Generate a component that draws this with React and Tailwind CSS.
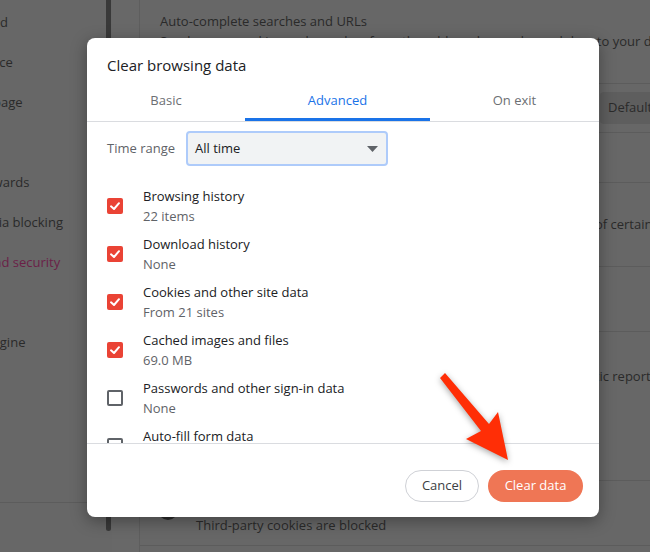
import React from 'react';

// Sidebar labels – only the tail of each one is on screen
const navItems = [
  { label: 'Get started' },
  { label: 'Appearance' },
  { label: 'My start page' },
  { label: '' },
  { label: 'Opera Rewards', shift: '-ml-[64px]' },
  { label: 'Social media blocking', shift: '-ml-[67px]' },
  { label: 'Privacy and security', active: true },
  { label: '' },
  { label: 'Search engine' },
];

const dataTypes = [
  { title: 'Browsing history', sub: '22 items', checked: true },
  { title: 'Download history', sub: 'None', checked: true },
  { title: 'Cookies and other site data', sub: 'From 21 sites', checked: true },
  { title: 'Cached images and files', sub: '69.0 MB', checked: true },
  { title: 'Passwords and other sign-in data', sub: 'None', checked: false },
  { title: 'Auto-fill form data', sub: 'None', checked: false },
];

const Checkbox = ({ checked }) =>
  checked ? (
    <div className="w-4 h-4 rounded-[2px] bg-[#ea4335] flex items-center justify-center shrink-0">
      <svg width="16" height="16" viewBox="0 0 16 16">
        <polyline points="4,8.3 7,11 12,5.2" fill="none" stroke="#fff" strokeWidth="2" strokeLinecap="round" strokeLinejoin="round" />
      </svg>
    </div>
  ) : (
    <div className="w-4 h-4 rounded-[2px] border-2 border-[#5f6368] shrink-0" />
  );

const Background = () => (
  <div className="flex h-full">
    {/* sidebar */}
    <div className="w-[105px] shrink-0 flex flex-col overflow-hidden border-b border-[#5c5c5c] h-[503px] pt-[3px]">
      {navItems.map((item, i) => (
        <div key={i} className="h-10 flex items-center">
          <span
            className={`${item.shift || '-ml-[60px]'} whitespace-nowrap text-[13px] ${item.active ? 'text-[#6b1f47]' : 'text-[#2a2a2a]'}`}
          >
            {item.label}
          </span>
        </div>
      ))}
    </div>
    {/* scrollbar */}
    <div className="w-[7px] shrink-0 flex justify-center">
      <div className="w-[5px] h-[531px] bg-[#393939] rounded-b-full" />
    </div>
    <div className="w-[28px] shrink-0 bg-[#686868] border-r border-[#5e5e5e]" />
    {/* settings card */}
    <div className="w-[560px] shrink-0 flex flex-col text-[13px] text-[#2a2a2a]">
      <div className="h-[84px] border-b border-[#5c5c5c] pl-5 pt-[11px]">
        <div className="leading-5">Auto-complete searches and URLs</div>
        <div className="leading-5 whitespace-nowrap">Sends some cookies and searches from the address bar and search box to your default search engine</div>
      </div>
      <div className="h-[49px] border-b border-[#5c5c5c] flex items-center justify-end">
        <div className="w-[100px] h-8 bg-[#5e5e5e] rounded-l flex items-center pl-2">Default</div>
      </div>
      <div className="h-[50px] border-b border-[#5c5c5c]" />
      <div className="h-[84px] border-b border-[#5c5c5c] flex items-center pl-5 whitespace-nowrap">
        Sends a "Do Not Track" request with your online traffic to let sites know of certain preferences
      </div>
      <div className="h-[65px] border-b border-[#5c5c5c]" />
      <div className="h-[149px] border-b border-[#5c5c5c] pl-5 pt-[34px] whitespace-nowrap">
        <div className="leading-5">Help improve Opera by periodically sending some statistics and diagnostic reports</div>
      </div>
      <div className="h-[65px] border-b border-[#5c5c5c] flex items-center pl-[18px] gap-[18px]">
        <div className="w-5 h-5 rounded-full bg-[#2a2a2a] -mt-[6px]" />
        <div className="flex flex-col pt-[3px]">
          <span className="leading-5">Cookies and other site data</span>
          <span className="leading-5">Third-party cookies are blocked</span>
        </div>
      </div>
    </div>
  </div>
);

const Dialog = () => (
  <div className="absolute left-[87px] top-[38px] w-[512px] h-[479px] bg-white rounded-lg shadow-[0_4px_16px_rgba(0,0,0,0.35)] flex flex-col overflow-hidden">
    <div className="pt-[17px] px-5 text-[15px] leading-5 text-[#202124]">Clear browsing data</div>
    <div className="flex border-b border-[#dadce0] text-[13px]">
      <div className="w-[158px] h-[46px] pt-[8px] flex items-center justify-center text-[#6c6f73] border-b-[3px] border-transparent">Basic</div>
      <div className="w-[185px] h-[46px] pt-[8px] flex items-center justify-center text-[#1a73e8] border-b-[3px] border-[#1a73e8]">Advanced</div>
      <div className="flex-1 h-[46px] pt-[8px] flex items-center justify-center text-[#6c6f73] border-b-[3px] border-transparent">On exit</div>
    </div>
    <div className="h-[322px] overflow-hidden border-b border-[#dadce0] px-5 pt-[9px]">
      <div className="flex items-center text-[13px]">
        <span className="w-[79px] text-[#5f6368]">Time range</span>
        <div className="w-[202px] h-[35px] rounded border-2 border-[#aecbfa] bg-[#f1f3f4] flex items-center justify-between pl-[7px] pr-[8px] text-[#202124]">
          <span>All time</span>
          <svg width="11" height="6" viewBox="0 0 11 6">
            <polygon points="0,0 11,0 5.5,6" fill="#5f6368" />
          </svg>
        </div>
      </div>
      <div className="mt-5 flex flex-col gap-2">
        {dataTypes.map((d) => (
          <div key={d.title} className="flex items-center h-10 gap-5">
            <Checkbox checked={d.checked} />
            <div className="flex flex-col text-[13px]">
              <span className="leading-5 text-[#202124]">{d.title}</span>
              <span className="leading-5 text-[#5f6368]">{d.sub}</span>
            </div>
          </div>
        ))}
      </div>
    </div>
    <div className="flex-1 flex justify-end items-start pt-[26px] pr-4 gap-[9px] text-[13px]">
      <button className="w-[74px] h-8 rounded-full border border-[#cfd1d6] text-[#3c4043]">Cancel</button>
      <button className="w-[95px] h-8 rounded-full bg-[#ef7655] text-white">Clear data</button>
    </div>
  </div>
);

export default function App() {
  return (
    <div className="relative w-[650px] h-[552px] overflow-hidden bg-[#676767] font-['Open_Sans',sans-serif]">
      <Background />
      <Dialog />
      <svg className="absolute left-0 top-0 pointer-events-none drop-shadow-[0_2px_3px_rgba(0,0,0,0.35)]" width="650" height="552">
        <polygon points="440,378 445,373 489,424 498,412 508,460 466,439 481,431" fill="#ff2e06" />
      </svg>
    </div>
  );
}
